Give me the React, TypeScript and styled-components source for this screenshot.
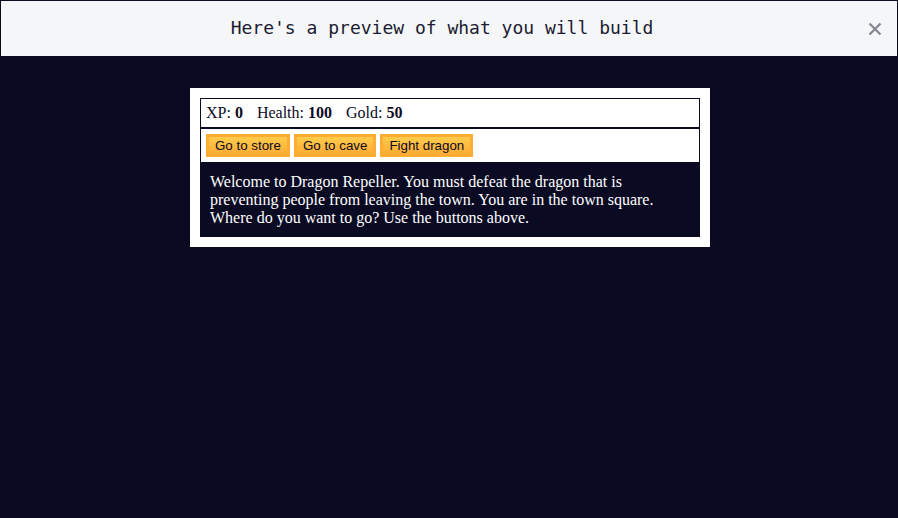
import React from "react";
import styled, { createGlobalStyle } from "styled-components";

const Global = createGlobalStyle`
  html, body { margin: 0; padding: 0; }
  body {
    background: #0a0a23;
    font-family: "Liberation Serif", "Times New Roman", serif;
    font-size: 16px;
    min-height: 518px;
  }
`;

const Header = styled.header`
  height: 56px;
  box-sizing: border-box;
  margin: 1px 1px 0;
  padding: 0 14px 3px 0;
  background: #f5f6f7;
  display: flex;
  align-items: center;
  justify-content: center;
  position: relative;
  border-bottom: 1px solid #0a0a23;
`;

const Title = styled.h1`
  margin: 0;
  font-family: "DejaVu Sans Mono", "Liberation Mono", monospace;
  font-weight: 400;
  font-size: 18px;
  color: #1b1b32;
`;

const Close = styled.button`
  position: absolute;
  right: 12px;
  top: 18px;
  width: 20px;
  height: 20px;
  padding: 0;
  border: none;
  background: transparent;
  display: flex;
  align-items: center;
  justify-content: center;
  cursor: pointer;
`;

const Game = styled.div`
  width: 500px;
  background: #ffffff;
  color: #ffffff;
  margin: 31px auto 0;
  padding: 10px;
  position: relative;
  left: 1px;
`;

const Panel = styled.div<{ $gap: number }>`
  border: 1px solid #0a0a23;
  padding: 5px;
  color: #0a0a23;
  display: flex;
  gap: ${(p) => p.$gap}px;
`;

const Stat = styled.span`
  padding-right: 10px;
`;

const Button = styled.button`
  cursor: pointer;
  color: #0a0a23;
  background-color: #feac32;
  background-image: linear-gradient(#fecc4c, #ffac33);
  border: 3px solid #feac32;
  font-family: "Liberation Sans", Arial, sans-serif;
  font-size: 13.33px;
  line-height: 15px;
  padding: 1px 6px;
`;

const Text = styled.div`
  background-color: #0a0a23;
  color: #ffffff;
  padding: 10px;
  line-height: 18px;
`;

export default function App() {
  return (
    <>
      <Global />
      <Header>
        <Title>Here's a preview of what you will build</Title>
        <Close aria-label="close">
          <svg width="14" height="14" viewBox="0 0 14 14">
            <path d="M1.5 1.5 L12.5 12.5 M12.5 1.5 L1.5 12.5" stroke="#858591" strokeWidth="2.2" />
          </svg>
        </Close>
      </Header>
      <Game>
        <Panel $gap={4}>
          <Stat>XP: <strong>0</strong></Stat>
          <Stat>Health: <strong>100</strong></Stat>
          <Stat>Gold: <strong>50</strong></Stat>
        </Panel>
        <Panel $gap={4}>
          <Button>Go to store</Button>
          <Button>Go to cave</Button>
          <Button>Fight dragon</Button>
        </Panel>
        <Text>
          Welcome to Dragon Repeller. You must defeat the dragon that is preventing people from leaving the town. You are in the town square. Where do you want to go? Use the buttons above.
        </Text>
      </Game>
    </>
  );
}
